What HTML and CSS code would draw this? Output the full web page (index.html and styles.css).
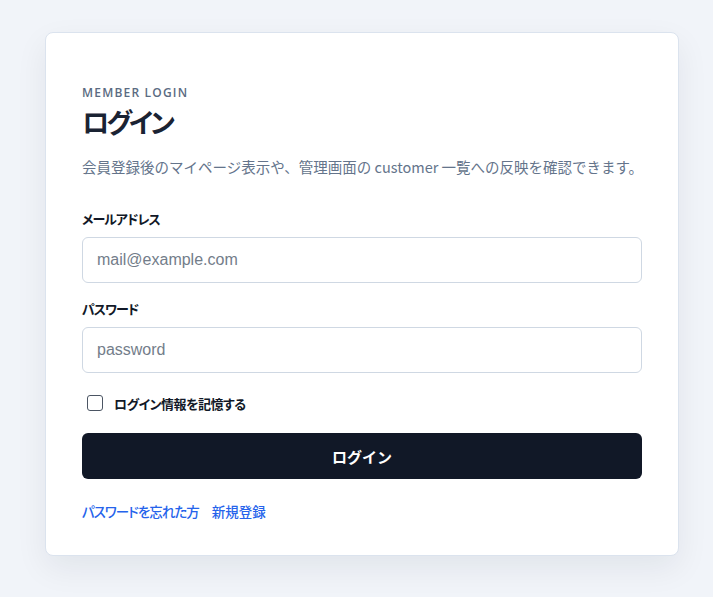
FILE: index.html
```html
<!DOCTYPE html>
<html lang="ja">
<head>
<meta charset="utf-8">
<title>ログイン</title>
<link rel="stylesheet" href="styles.css">
</head>
<body>
<main class="page">
  <section class="card">
    <p class="eyebrow">MEMBER LOGIN</p>
    <h1 class="title">ログイン</h1>
    <p class="lead">会員登録後のマイページ表示や、管理画面の customer 一覧への反映を確認できます。</p>
    <form class="form">
      <label class="field">
        <span class="label">メールアドレス</span>
        <input class="input" type="email" placeholder="mail@example.com">
      </label>
      <label class="field">
        <span class="label">パスワード</span>
        <input class="input" type="password" placeholder="password">
      </label>
      <label class="remember">
        <span class="checkbox"></span>
        <span class="remember-text">ログイン情報を記憶する</span>
      </label>
      <button class="submit" type="button">ログイン</button>
    </form>
    <div class="links">
      <a class="link link-kana" href="#">パスワードを忘れた方</a>
      <a class="link" href="#">新規登録</a>
    </div>
  </section>
</main>
</body>
</html>
```

FILE: styles.css
```css
* { box-sizing: border-box; }
html, body { margin: 0; padding: 0; }
body {
  background: #f1f4f9;
  font-family: "Noto Sans CJK JP", "Noto Sans", sans-serif;
  color: #111827;
  height: 597px;
  overflow: hidden;
}
.page {
  padding: 32px 0 0 45px;
}
.card {
  width: 634px;
  background: #fff;
  border: 1px solid #dbe3ee;
  border-radius: 8px;
  box-shadow: 0 12px 32px rgba(15, 23, 42, 0.07);
  padding: 52px 36px 34px;
}
.eyebrow {
  margin: 0;
  font-family: "Open Sans", "Noto Sans", sans-serif;
  font-size: 12px;
  font-weight: 600;
  letter-spacing: 0.1em;
  color: #5b6b82;
  line-height: 16px;
}
.title {
  margin: 2px 0 0;
  font-size: 27px;
  font-weight: 700;
  line-height: 38px;
  color: #1a2333;
  font-feature-settings: "palt";
  letter-spacing: -3px;
}
.lead {
  margin: 14px 0 0;
  font-size: 14.5px;
  line-height: 24px;
  color: #64748b;
  white-space: nowrap;
}
.form {
  margin-top: 30px;
  display: flex;
  flex-direction: column;
}
.field {
  display: flex;
  flex-direction: column;
  margin-bottom: 16px;
}
.label {
  font-size: 13px;
  font-weight: 700;
  line-height: 20px;
  color: #111827;
  margin-bottom: 8px;
  font-feature-settings: "palt";
  letter-spacing: -1px;
}
.input {
  height: 46px;
  width: 100%;
  border: 1px solid #cfd8e3;
  border-radius: 6px;
  padding: 0 14px;
  font-family: "Liberation Sans", Arial, sans-serif;
  font-size: 16px;
  color: #111827;
  background: #fff;
}
.input::placeholder { color: #737d8a; }
.remember {
  display: flex;
  align-items: center;
  gap: 11px;
  padding-left: 5px;
  margin-top: 2px;
  height: 24px;
}
.checkbox {
  width: 16px;
  height: 16px;
  border: 1.5px solid #4b5563;
  border-radius: 3px;
  background: #fff;
}
.remember-text {
  font-size: 13px;
  font-weight: 700;
  color: #111827;
  font-feature-settings: "palt";
  letter-spacing: -0.5px;
}
.submit {
  margin-top: 18px;
  height: 46px;
  border: none;
  border-radius: 6px;
  background: #111827;
  color: #fff;
  font-family: "Noto Sans CJK JP", sans-serif;
  font-size: 15px;
  font-weight: 700;
}
.links {
  margin-top: 22px;
  display: flex;
  gap: 13px;
}
.link {
  font-size: 13.5px;
  font-weight: 500;
  color: #2563eb;
  text-decoration: none;
  line-height: 20px;
  font-feature-settings: "palt";
}
.link-kana {
  letter-spacing: -1px;
}
```
